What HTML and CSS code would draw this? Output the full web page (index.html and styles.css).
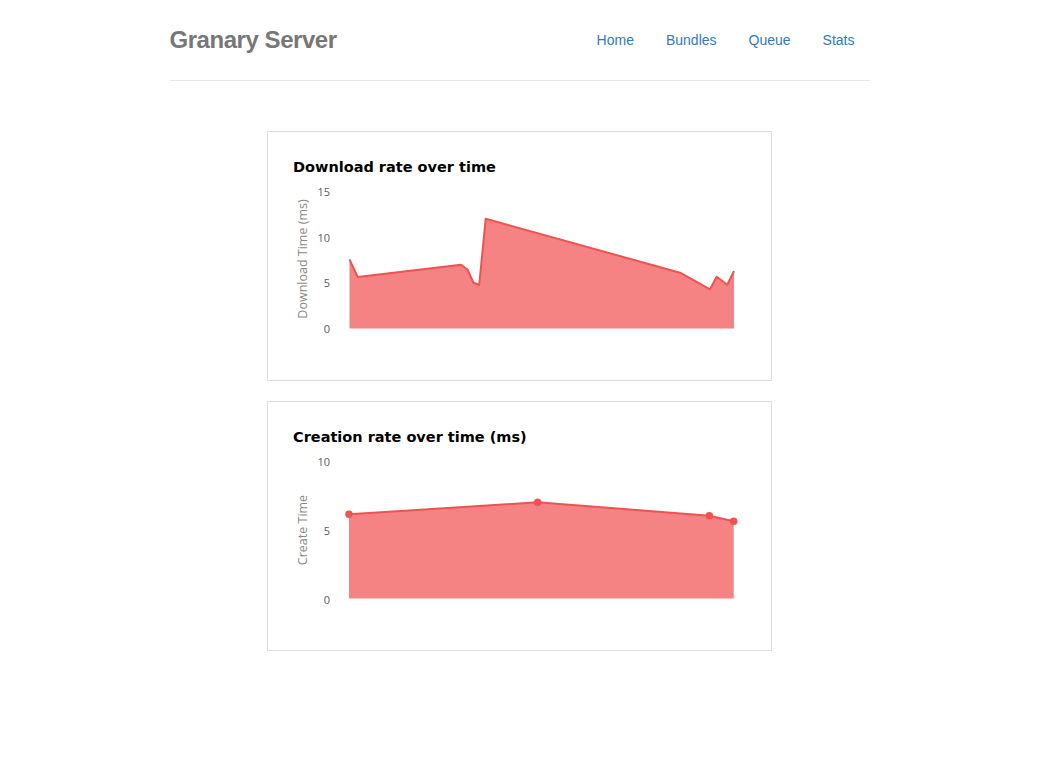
FILE: index.html
```html
<!DOCTYPE html>
<html>
<head>
<meta charset="utf-8">
<title>Granary Server</title>
<link rel="stylesheet" href="styles.css">
</head>
<body>
<div class="container">
  <header class="header">
    <h3 class="brand">Granary Server</h3>
    <nav>
      <ul class="nav">
        <li><a href="#">Home</a></li>
        <li><a href="#">Bundles</a></li>
        <li><a href="#">Queue</a></li>
        <li><a href="#">Stats</a></li>
      </ul>
    </nav>
  </header>
</div>

<main class="charts">
  <section class="card">
    <h2 class="card-title">Download rate over time</h2>
    <svg class="chart" width="453" height="175" viewBox="0 0 453 175">
      <g class="ticks">
        <text x="37" y="16">15</text>
        <text x="37" y="62">10</text>
        <text x="37" y="107">5</text>
        <text x="37" y="153">0</text>
      </g>
      <text class="axis-title" transform="translate(14 79) rotate(-90)">Download Time (ms)</text>
      <polygon class="area" points="56.5,148.5 56.5,79.3 64.7,97 168,84.7 174.5,89.5 180.3,102.5 186.2,105 192.7,38.8 387,92.7 417,109.3 423.7,96.7 434.3,104.7 441,91 441,148.5"/>
      <polyline class="line" points="56.5,79.3 64.7,97 168,84.7 174.5,89.5 180.3,102.5 186.2,105 192.7,38.8 387,92.7 417,109.3 423.7,96.7 434.3,104.7 441,91"/>
    </svg>
  </section>

  <section class="card">
    <h2 class="card-title">Creation rate over time (ms)</h2>
    <svg class="chart" width="453" height="175" viewBox="0 0 453 175">
      <g class="ticks">
        <text x="37" y="16">10</text>
        <text x="37" y="85">5</text>
        <text x="37" y="154">0</text>
      </g>
      <text class="axis-title" transform="translate(14 80) rotate(-90)">Create Time</text>
      <polygon class="area" points="56,148.5 56,64.3 244.7,52.3 416.3,65.7 440.7,71.3 440.7,148.5"/>
      <polyline class="line" points="56,64.3 244.7,52.3 416.3,65.7 440.7,71.3"/>
      <g class="dots">
        <circle cx="56" cy="64.3" r="3.8"/>
        <circle cx="244.7" cy="52.3" r="3.8"/>
        <circle cx="416.3" cy="65.7" r="3.8"/>
        <circle cx="440.7" cy="71.3" r="3.8"/>
      </g>
    </svg>
  </section>
</main>
</body>
</html>
```

FILE: styles.css
```css
* { box-sizing: border-box; }

html, body {
  margin: 0;
  padding: 0;
  background: #fff;
}

body {
  padding-top: 20px;
  font-family: "Liberation Sans", Arial, sans-serif;
  font-size: 14px;
  line-height: 20px;
  color: #333;
}

.container {
  max-width: 730px;
  margin: 0 auto;
  padding: 0 15px;
}

.header {
  display: flex;
  justify-content: space-between;
  align-items: flex-start;
  padding-bottom: 20px;
  border-bottom: 1px solid #e5e5e5;
}

.brand {
  margin: 0;
  font-size: 24px;
  line-height: 40px;
  font-weight: bold;
  color: #777;
  letter-spacing: -0.45px;
}

.nav {
  display: flex;
  gap: 2px;
  list-style: none;
  margin: 0;
  padding: 0;
}

.nav a {
  display: block;
  padding: 10px 15px;
  color: #337ab7;
  text-decoration: none;
  font-size: 14px;
  line-height: 20px;
}

.charts {
  display: flex;
  flex-direction: column;
  align-items: center;
  gap: 20px;
  margin-top: 50px;
}

.card {
  width: 505px;
  height: 250px;
  border: 1px solid #ddd;
  padding: 25px 25px 0 25px;
}

.card-title {
  margin: 0 0 3px 0;
  font-family: "DejaVu Sans", "Open Sans", sans-serif;
  font-size: 14.5px;
  line-height: 20px;
  font-weight: bold;
  color: #000;
}

.chart {
  display: block;
  overflow: visible;
}

.ticks text {
  font-family: "Open Sans", "DejaVu Sans", sans-serif;
  font-size: 11px;
  fill: #5a5a5a;
  text-anchor: end;
}

.axis-title {
  font-family: "Open Sans", "DejaVu Sans", sans-serif;
  font-size: 12.5px;
  fill: #888;
  text-anchor: middle;
}

.area {
  fill: #f68383;
  stroke: none;
}

.line {
  fill: none;
  stroke: #f05252;
  stroke-width: 2;
  stroke-linejoin: round;
}

.dots circle {
  fill: #f05252;
}
```
